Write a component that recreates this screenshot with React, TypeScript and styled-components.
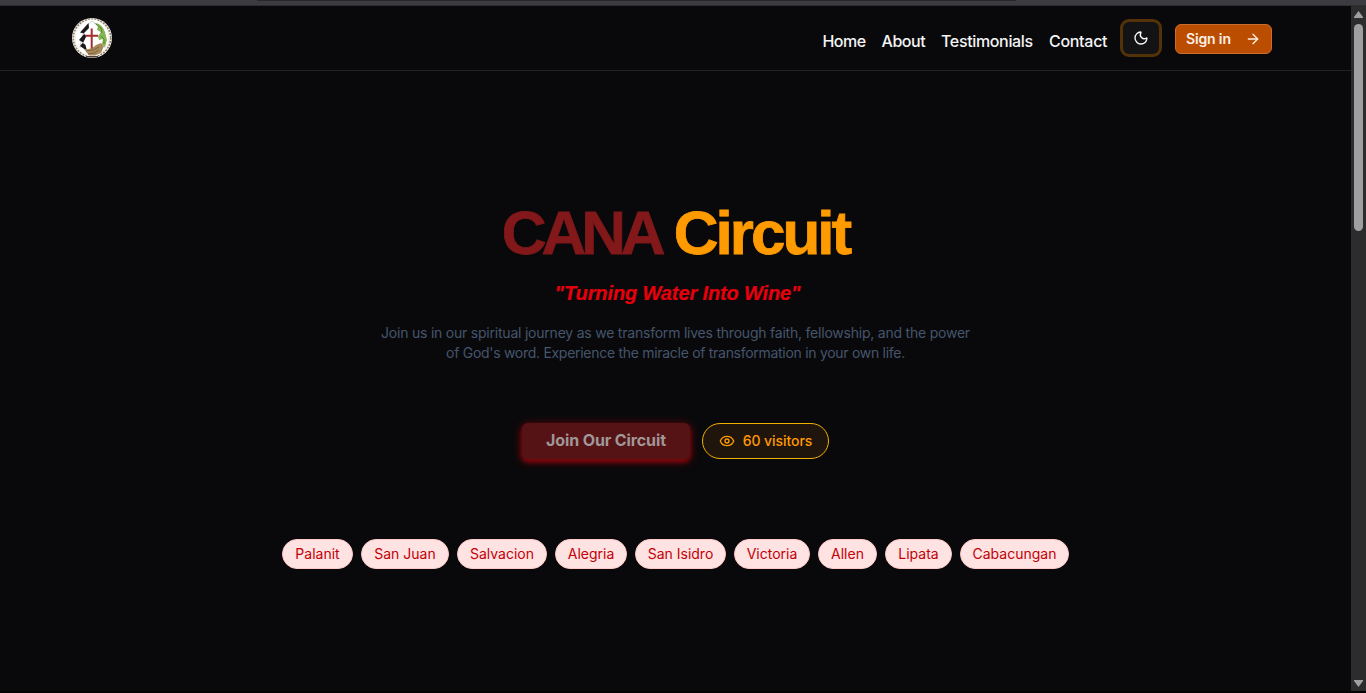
import React from 'react';
import styled, { createGlobalStyle } from 'styled-components';
import { ArrowRight, Eye, Moon } from 'lucide-react';

const GlobalStyle = createGlobalStyle`
  * { box-sizing: border-box; }
  body { margin: 0; background: #09090b; overflow: hidden; font-family: Inter, "Liberation Sans", sans-serif; }
`;

const Frame = styled.div`
  display: flex;
  flex-direction: column;
  height: 693px;
  background: #09090b;
`;

const BrowserEdge = styled.div`
  flex: none;
  height: 6px;
  display: flex;
  justify-content: center;
  background: #3c3b40;
  border-bottom: 1px solid #2d2d2f;
  padding-right: 93px;
`;

const AddressBar = styled.div`
  width: 759px;
  height: 1px;
  background: #28272b;
`;

const Viewport = styled.div`
  flex: 1;
  display: flex;
  border-bottom: 2px solid #030303;
`;

const Page = styled.div`
  flex: 1;
  min-width: 0;
`;

const Header = styled.header`
  height: 65px;
  display: flex;
  align-items: flex-start;
  justify-content: space-between;
  padding: 12px 79px 0 72px;
  border-bottom: 1px solid #232325;
`;

const Logo = styled.svg`
  display: block;
  width: 40px;
  height: 40px;
`;

const HeaderRight = styled.div`
  display: flex;
  align-items: flex-start;
`;

const Nav = styled.nav`
  display: flex;
  gap: 16px;
  margin: 11px 12px 0 0;
`;

const NavLink = styled.a<{ $width: number; $tracking: number }>`
  width: ${(p) => p.$width}px;
  font-size: 16px;
  line-height: 24px;
  font-weight: 500;
  letter-spacing: ${(p) => p.$tracking}px;
  white-space: nowrap;
  color: #f4f4f5;
`;

const ThemeButton = styled.button`
  width: 42px;
  height: 38px;
  margin: 1px 13px 0 0;
  padding: 0;
  display: flex;
  align-items: center;
  justify-content: center;
  color: #fafafa;
  background: #131316;
  border: 3px solid #533209;
  border-radius: 9px;
`;

const SignIn = styled.button`
  width: 97px;
  height: 30px;
  margin-top: 6px;
  padding: 0 10px;
  display: flex;
  align-items: center;
  justify-content: space-between;
  font: 600 14px/20px Inter, sans-serif;
  letter-spacing: -0.15px;
  color: #fdf0e6;
  background: #bb4d00;
  border: 1px solid #cb6d2d;
  border-radius: 6px;
`;

const Hero = styled.main`
  display: flex;
  flex-direction: column;
  align-items: center;
  padding-top: 132px;
`;

const Title = styled.h1`
  margin: 0;
  font-family: "Liberation Sans", Arial, sans-serif;
  font-size: 62px;
  line-height: 60px;
  font-weight: 700;
  letter-spacing: -3px;
  word-spacing: -1px;
  -webkit-text-stroke: 0.8px currentColor;
  white-space: nowrap;
  color: #ff9a00;
`;

const TitleAccent = styled.span`
  letter-spacing: -5.1px;
  color: #82181a;
`;

const Tagline = styled.p`
  margin: 16px 0 0 4px;
  font-family: "Liberation Sans", Arial, sans-serif;
  font-size: 20px;
  line-height: 28px;
  font-weight: 700;
  font-style: italic;
  letter-spacing: -0.13px;
  -webkit-text-stroke: 0.2px currentColor;
  color: #e7000b;
`;

const Intro = styled.p`
  margin: 16px 0 0;
  text-align: center;
  font-size: 14px;
  line-height: 20px;
  white-space: nowrap;
  color: #45556c;
`;

const IntroLine = styled.span<{ $tracking: number }>`
  display: block;
  letter-spacing: ${(p) => p.$tracking}px;
`;

const Actions = styled.div`
  display: flex;
  gap: 12px;
  margin-top: 60px;
`;

const JoinButton = styled.button`
  width: 168px;
  height: 36px;
  padding: 0 0 2px;
  border: 0;
  border-radius: 6px;
  font: 700 16px/24px Inter, sans-serif;
  letter-spacing: -0.12px;
  color: #a19798;
  background: #551315;
  box-shadow: 0 3px 4px #7a070d, 0 2px 9px 1px #7d080ddd;
`;

const Visitors = styled.div`
  width: 127px;
  height: 36px;
  display: flex;
  align-items: center;
  justify-content: center;
  gap: 8px;
  font-size: 14px;
  line-height: 20px;
  font-weight: 500;
  color: #ff9a00;
  background: #20150c;
  border: 1px solid #f0b100;
  border-radius: 18px;
  white-space: nowrap;
`;

const VisitorCount = styled.span`
  padding-bottom: 1px;
  letter-spacing: -0.05px;
`;

const Chips = styled.div`
  display: flex;
  gap: 8px;
  margin-top: 80px;
`;

const Chip = styled.span<{ $width: number }>`
  width: ${(p) => p.$width}px;
  height: 30px;
  text-align: center;
  font-size: 14px;
  line-height: 28px;
  white-space: nowrap;
  color: #c10007;
  background: #ffe2e2;
  border: 1px solid #ffc9c9;
  border-radius: 15px;
`;

const Scrollbar = styled.div`
  width: 15px;
  display: flex;
  flex-direction: column;
  align-items: center;
  background: #2c2c2c;
  padding: 5px 0 4px;
`;

const Arrow = styled.svg`
  display: block;
  width: 9px;
  height: 7px;
  fill: #9f9f9f;
`;

const Thumb = styled.div`
  width: 9px;
  height: 207px;
  margin: 6px 0 auto;
  border-radius: 5px;
  background: #9f9f9f;
`;

const links = [
  { label: 'Home', width: 43, tracking: -0.55 },
  { label: 'About', width: 43.5, tracking: -0.45 },
  { label: 'Testimonials', width: 92, tracking: -0.35 },
  { label: 'Contact', width: 59, tracking: -0.3 },
];

const places = [
  { name: 'Palanit', width: 71 },
  { name: 'San Juan', width: 88 },
  { name: 'Salvacion', width: 90 },
  { name: 'Alegria', width: 72 },
  { name: 'San Isidro', width: 91 },
  { name: 'Victoria', width: 76 },
  { name: 'Allen', width: 59 },
  { name: 'Lipata', width: 67 },
  { name: 'Cabacungan', width: 109 },
];

function Emblem() {
  return (
    <Logo viewBox="0 0 40 40">
      <circle cx="20" cy="20" r="20" fill="#f4f1ec" />
      <circle cx="20" cy="20" r="18.7" fill="none" stroke="#8d7c68" strokeWidth="1.6" strokeDasharray="1.8 1.3" />
      <ellipse cx="20" cy="20" rx="16.2" ry="18.5" fill="#fff" />
      <path d="M8 30C9 18 14 7 20 3c7 4 12 14 13 27" fill="none" stroke="#b9c6cc" strokeWidth=".8" />
      <path d="M16.500 5 8 14.500l4.500 1L7 22l4 2.500L8 28l7 5-1.500-6-2.500-2 3.500-7-3-2.500L17 10z" fill="#1a1a1a" />
      <path d="M22 5c5 0 9 3 11 9l2 8-2 7-3-3 1-5-4 1-1-4 3-4-4-2 1-4z" fill="#86b553" />
      <path d="m24 6 5 4 1 5m-1 3 3 3v5" fill="none" stroke="#4c8232" strokeWidth=".9" />
      <path d="M12 31q7 1 12-4l5-2 3 3-3 7-6 2.500h-6z" fill="#a88a5a" />
      <path d="M14 33q8 0 13-4m-11 7q7 0 11-4" fill="none" stroke="#6c5333" strokeWidth=".7" />
      <path d="M19.700 10.500v20M13.500 17.700h12.500" stroke="#a3302e" strokeWidth="2" />
      <path d="M14 38.700h12" stroke="#4a4038" strokeWidth="1.400" />
    </Logo>
  );
}

export default function App() {
  return (
    <Frame>
      <GlobalStyle />
      <BrowserEdge><AddressBar /></BrowserEdge>
      <Viewport>
        <Page>
          <Header>
            <Emblem />
            <HeaderRight>
              <Nav>
                {links.map((l) => (
                  <NavLink key={l.label} $width={l.width} $tracking={l.tracking}>{l.label}</NavLink>
                ))}
              </Nav>
              <ThemeButton aria-label="Toggle theme"><Moon size={16} strokeWidth={2} /></ThemeButton>
              <SignIn>Sign in<ArrowRight size={16} strokeWidth={2} /></SignIn>
            </HeaderRight>
          </Header>
          <Hero>
            <Title><TitleAccent>CANA</TitleAccent> Circuit</Title>
            <Tagline>"Turning Water Into Wine"</Tagline>
            <Intro>
              <IntroLine $tracking={-0.22}>
                Join us in our spiritual journey as we transform lives through faith, fellowship, and the power
              </IntroLine>
              <IntroLine $tracking={-0.29}>
                of God's word. Experience the miracle of transformation in your own life.
              </IntroLine>
            </Intro>
            <Actions>
              <JoinButton>Join Our Circuit</JoinButton>
              <Visitors><Eye size={16} strokeWidth={2} /><VisitorCount>60 visitors</VisitorCount></Visitors>
            </Actions>
            <Chips>
              {places.map((p) => <Chip key={p.name} $width={p.width}>{p.name}</Chip>)}
            </Chips>
          </Hero>
        </Page>
        <Scrollbar>
          <Arrow viewBox="0 0 9 7"><path d="M4.5 0 9 6v1H0V6z" /></Arrow>
          <Thumb />
          <Arrow viewBox="0 0 9 7"><path d="M4.5 7 9 1V0H0v1z" /></Arrow>
        </Scrollbar>
      </Viewport>
    </Frame>
  );
}
